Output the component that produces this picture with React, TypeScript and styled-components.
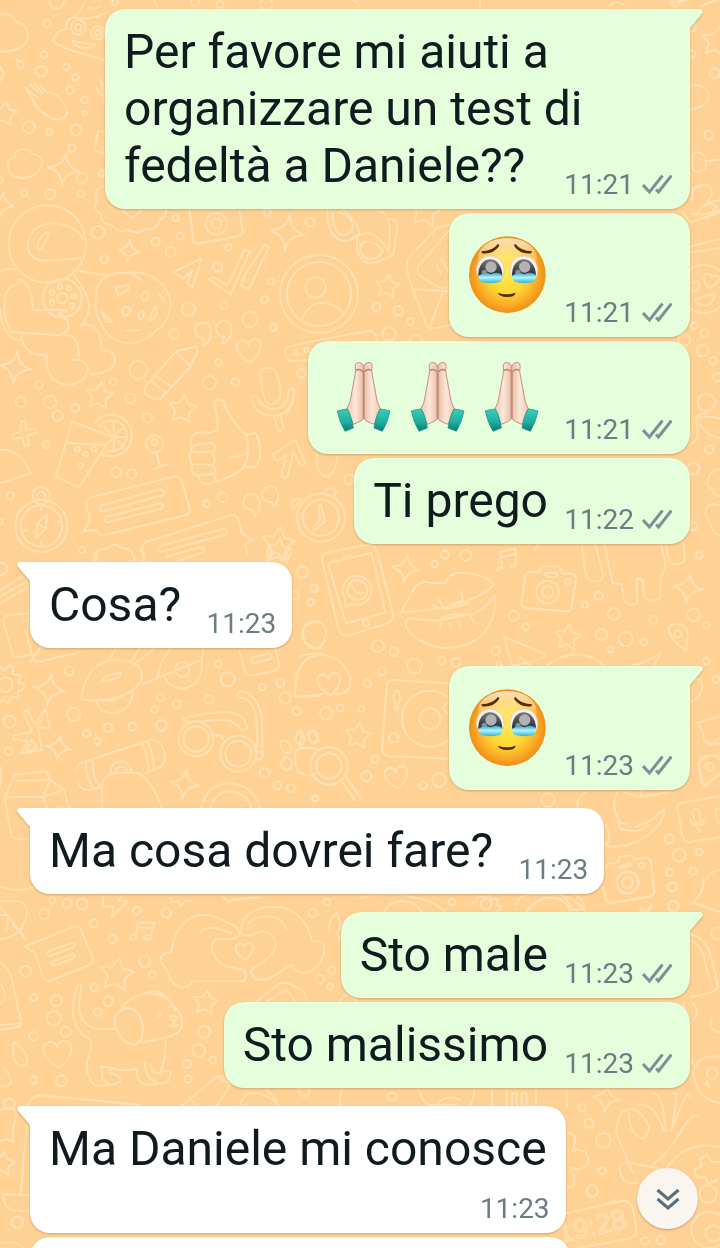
import React from "react";
import styled, { createGlobalStyle } from "styled-components";

const GlobalStyle = createGlobalStyle`
  * { box-sizing: border-box; }
  body {
    margin: 0;
    background: #ffd194;
    font-family: Roboto, "Liberation Sans", sans-serif;
  }
`;

/* ---------- Layout ---------- */

const Screen = styled.main`
  position: relative;
  height: 100vh;
  overflow: hidden;
  background: #ffd194;
`;

const WallpaperSvg = styled.svg`
  position: absolute;
  inset: 0;
  width: 100%;
  height: 100%;
  fill: none;
  stroke: #ffe0b0;
  stroke-width: 6;
  stroke-linecap: round;
  stroke-linejoin: round;
`;

const Thread = styled.ol`
  position: relative;
  display: flex;
  flex-direction: column;
  gap: 18px;
  margin: 0;
  padding: 9px 30px;
  list-style: none;
`;

const Group = styled.li<{ $out: boolean }>`
  display: flex;
  flex-direction: column;
  align-items: ${(p) => (p.$out ? "flex-end" : "flex-start")};
  gap: 4px;
`;

const Bubble = styled.article<{ $out: boolean; $first: boolean; $stacked?: boolean }>`
  position: relative;
  display: grid;
  max-width: calc(100% - ${(p) => (p.$stacked ? 120 : 75)}px);
  padding: 14px ${(p) => (p.$out ? 18 : 16)}px 7px 19px;
  border-radius: 20px;
  ${(p) => p.$first && (p.$out ? "border-top-right-radius: 0;" : "border-top-left-radius: 0;")}
  background: ${(p) => (p.$out ? "#e5fedb" : "#ffffff")};
  filter: drop-shadow(0 1px 1px rgba(120, 80, 20, 0.35));
`;

const TailSvg = styled.svg<{ $out: boolean }>`
  position: absolute;
  top: 0;
  ${(p) => (p.$out ? "right: -13px;" : "left: -13px; transform: scaleX(-1);")}
  width: 14px;
  height: 21px;
  fill: ${(p) => (p.$out ? "#e5fedb" : "#ffffff")};
`;

const Text = styled.p<{ $spacer: number; $stacked?: boolean }>`
  grid-area: 1 / 1;
  margin: 0 0 8px;
  padding-right: ${(p) => (p.$stacked ? 3 : 0)}px;
  color: #101b20;
  font-size: 48px;
  line-height: 57px;

  &::after {
    content: "";
    display: ${(p) => (p.$stacked ? "none" : "inline-block")};
    width: ${(p) => p.$spacer}px;
    height: 1px;
  }
`;

const EmojiRow = styled.div<{ $tall: boolean }>`
  grid-area: 1 / 1;
  display: flex;
  padding: ${(p) => (p.$tall ? "9px 124px 17px 0" : "5px 123px 13px 0")};
`;

const Meta = styled.footer<{ $stacked?: boolean }>`
  grid-area: ${(p) => (p.$stacked ? "2 / 1" : "1 / 1")};
  justify-self: end;
  align-self: end;
  display: flex;
  align-items: center;
  gap: 8px;
  margin-top: ${(p) => (p.$stacked ? 7 : 0)}px;
  color: #6b7d82;
  font-size: 28px;
  line-height: 34px;
`;

const TickSvg = styled.svg`
  width: 30px;
  height: 20px;
  fill: none;
  stroke: #7d9097;
  stroke-width: 3;
`;

const FaceSvg = styled.svg`
  display: block;
  width: 80px;
  height: 77px;
`;

const HandsSvg = styled.svg`
  display: block;
  width: 74px;
  height: 74px;
`;

const JumpButton = styled.button`
  position: absolute;
  right: 22px;
  bottom: 19px;
  display: grid;
  place-items: center;
  width: 61px;
  height: 61px;
  padding: 0;
  border: 0;
  border-radius: 50%;
  background: #f9f5ef;
  box-shadow: 0 1px 2px rgba(90, 60, 20, 0.35);
  cursor: pointer;

  svg {
    width: 24px;
    height: 24px;
    fill: none;
    stroke: #5c6d77;
    stroke-width: 3;
  }
`;

/* ---------- Small drawings ---------- */

const Tail = ({ out }: { out: boolean }) => (
  <TailSvg $out={out} viewBox="0 0 14 21" aria-hidden="true">
    <path d="M0 0H11.5Q15.2 1 13.2 4.6L1 19V21H0Z" />
  </TailSvg>
);

const Ticks = () => (
  <TickSvg viewBox="0 0 30 20" role="img" aria-label="Consegnato">
    <path d="M1 10L7.5 17L20.500 .5M14 14.500L16.500 17L29.500 .5" />
  </TickSvg>
);

const TearyFace = () => (
  <FaceSvg viewBox="0 0 240 231" role="img" aria-label="Faccina che trattiene le lacrime">
    <defs>
      <radialGradient id="skin" cx="0.5" cy="0.5" r="0.52">
        <stop offset="0" stopColor="#ffe94a" />
        <stop offset="0.45" stopColor="#fdd835" />
        <stop offset="0.8" stopColor="#fba524" />
        <stop offset="1" stopColor="#e88a16" />
      </radialGradient>
      <linearGradient id="shine" x1="0" y1="0" x2="0" y2="1">
        <stop offset="0" stopColor="#fff" stopOpacity="0.7" />
        <stop offset="1" stopColor="#fff2a0" stopOpacity="0" />
      </linearGradient>
      <linearGradient id="tear" x1="0" y1="0" x2="0" y2="1">
        <stop offset="0" stopColor="#2ba9cf" />
        <stop offset="0.45" stopColor="#b5f2fb" />
        <stop offset="1" stopColor="#2cb4da" />
      </linearGradient>
      <linearGradient id="iris" x1="0" y1="0" x2="0" y2="1">
        <stop offset="0" stopColor="#77787c" />
        <stop offset="0.5" stopColor="#4a4c50" />
        <stop offset="1" stopColor="#24282c" />
      </linearGradient>
    </defs>
    <circle cx="118" cy="116" r="115" fill="url(#skin)" />
    <ellipse cx="118" cy="66" rx="88" ry="60" fill="url(#shine)" />
    <g fill="#503106">
      <path d="M40 46Q72 46 90 24Q95 24 93 31Q76 56 42 52Z" />
      <path d="M192 46Q160 46 142 24Q137 24 139 31Q156 56 190 52Z" />
      <path d="M90 170Q116 180 142 170Q144 182 118 183Q92 182 90 170Z" />
    </g>
    {[0, 101].map((x) => (
      <g key={x} transform={`translate(${x} 0)`}>
        <path d="M25 104C24 46 108 44 108 104C108 116 104 124 100 128H36C30 122 26 114 25 104Z" fill="#f3f1ee" stroke="#ddc9a4" strokeWidth="2" />
        <path d="M31 122C28 54 102 52 103 120Z" fill="url(#iris)" />
        <circle cx="69" cy="93" r="17" fill="#b2b2b5" />
        <circle cx="49" cy="109" r="8" fill="#8e8f95" />
        <path d="M31 119Q50 106 68 115Q86 105 103 117Q104 132 96 138Q68 145 40 138Q31 132 31 119Z" fill="url(#tear)" />
      </g>
    ))}
  </FaceSvg>
);

const PrayingHands = () => (
  <HandsSvg viewBox="0 0 222 222" role="img" aria-label="Mani giunte">
    <defs>
      <linearGradient id="palm" x1="0" y1="0" x2="1" y2="0">
        <stop offset="0" stopColor="#edc8b4" />
        <stop offset="0.5" stopColor="#fbe7da" />
        <stop offset="1" stopColor="#e6bda8" />
      </linearGradient>
      <linearGradient id="cuff" x1="0" y1="0" x2="0" y2="1">
        <stop offset="0" stopColor="#3bcdb9" />
        <stop offset="0.6" stopColor="#20ad9d" />
        <stop offset="1" stopColor="#08796f" />
      </linearGradient>
    </defs>
    {[1, -1].map((side) => (
      <g key={side} transform={side === 1 ? undefined : "translate(220 0) scale(-1 1)"}>
        <path
          d="M110 18C105 6 90 5 86 12Q83 18 86 32C84 50 77 80 73 106Q70 130 60 146L78 193C92 188 105 184 110 174Z"
          fill="url(#palm)"
          stroke="#c98f77"
          strokeWidth="3"
        />
        <path d="M87 31Q98 24 109 36" fill="none" stroke="#bd7e66" strokeWidth="4" />
        <path d="M109 38V176" fill="none" stroke="#c1876f" strokeWidth="4" />
        <path d="M31 153Q46 148 61 147Q74 168 79 204L54 214Q38 188 31 153Z" fill="url(#cuff)" stroke="#118d82" strokeWidth="2" strokeLinejoin="round" />
      </g>
    ))}
  </HandsSvg>
);

/* ---------- Wallpaper ---------- */

type Point = [number, number, number];

const starPath = (points: number, inner: number) => {
  const parts: string[] = [];
  for (let i = 0; i < points * 2; i++) {
    const r = i % 2 ? inner : 1;
    const a = (Math.PI * i) / points - Math.PI / 2;
    parts.push(`${(Math.cos(a) * r).toFixed(3)} ${(Math.sin(a) * r).toFixed(3)}`);
  }
  return `M${parts.join("L")}Z`;
};

const STAR = starPath(5, 0.52);
const SPARKLE = "M0 -1Q.12 -.15 1 0Q.12 .15 0 1Q-.12 .15 -1 0Q-.12 -.15 0 -1Z";
const HEART = "M0 1C-1.300 .1 -1.200 -.9 -.5 -.9Q-.1 -.9 0 -.45Q.1 -.9 .5 -.9C1.200 -.9 1.300 .1 0 1Z";

const Shapes = ({ d, at, turn = 8 }: { d: string; at: Point[]; turn?: number }) => (
  <>
    {at.map(([x, y, r]) => (
      <path key={`${x}-${y}`} d={d} transform={`translate(${x} ${y}) rotate(${turn}) scale(${r})`} strokeWidth={6 / r} />
    ))}
  </>
);

const Rings = ({ at }: { at: Point[] }) => (
  <>
    {at.map(([x, y, r]) => (
      <circle key={`${x}-${y}-${r}`} cx={x} cy={y} r={r} />
    ))}
  </>
);

const Doodle = ({ x, y, children }: { x: number; y: number; children: React.ReactNode }) => (
  <g transform={`translate(${x * 3} ${y * 3})`}>{children}</g>
);

const Wallpaper = () => (
  <WallpaperSvg viewBox="0 0 2160 3744" preserveAspectRatio="xMidYMin slice" aria-hidden="true">
    <Doodle x={0} y={0}>
      <Rings
        at={[
          [170, 4, 22], [345, 6, 9], [141, 70, 11], [131, 164, 10], [124, 213, 16], [200, 201, 10], [226, 232, 10],
          [210, 271, 12], [254, 300, 10], [254, 340, 7], [86, 382, 18], [148, 397, 9], [228, 390, 16], [215, 445, 11],
          [246, 533, 15], [305, 520, 9], [73, 578, 9], [151, 583, 15], [243, 581, 10], [0, 540, 8],
          [235, 82, 22], [235, 82, 10], [294, 98, 20], [294, 98, 9], [585, 6, 12], [660, 14, 11], [798, 12, 18],
        ]}
      />
      <path d="M0 42Q36 36 46 66Q86 70 84 112Q76 144 36 152L0 155" />
      <path d="M250 12Q240 38 222 52Q195 58 200 86Q164 92 160 122Q170 138 240 158L312 180M222 52Q260 64 314 40M266 22Q280 34 300 18M218 122Q250 132 286 132Q280 148 240 142Q220 136 218 122Z" />
      <path d="M50 178Q78 190 68 204Q52 208 50 178Z" />
      <path d="M92 252L112 276M104 250L128 282M120 256L140 276Q184 278 202 336Q196 366 156 356Q110 330 100 302L76 264L110 292" />
      <path d="M0 200Q18 220 0 244M300 236L308 264M290 262L296 280L316 290M316 396L294 394L282 454L316 460" />
      <path d="M24 500Q20 476 44 472Q46 444 72 448Q96 450 98 462Q126 464 126 490Q118 530 66 534Q26 532 24 500Z" />
      <Shapes d={STAR} at={[[14, 342, 38]]} />
      <Shapes d={SPARKLE} at={[[192, 508, 48], [6, 614, 36]]} />
      <path d="M306 558Q278 572 290 602Q274 626 304 642Q300 672 334 674Q350 700 384 690Q412 704 436 688Q476 690 480 656Q500 652 498 632M368 632L396 654L424 632" />
      <path d="M460 0L472 20M1060 0L1080 18M1440 0V20M2010 10L2060 0M1830 16Q1850 -4 1872 16" />
    </Doodle>

    <Doodle x={0} y={200}>
      <Rings
        at={[
          [142, 132, 116], [294, 97, 19], [313, 178, 11], [466, 125, 12], [512, 155, 15], [540, 109, 10], [527, 55, 9],
          [649, 71, 32], [649, 71, 14], [686, 142, 10], [653, 201, 14], [565, 327, 20], [672, 317, 11], [750, 358, 23],
          [813, 244, 9], [794, 298, 10], [820, 382, 10], [522, 402, 14], [415, 510, 27], [339, 545, 10], [392, 595, 15],
          [442, 653, 14], [628, 548, 20], [655, 487, 10], [706, 546, 11], [117, 555, 11], [62, 606, 15], [150, 606, 19],
          [173, 647, 15], [226, 624, 12], [140, 735, 11], [349, 817, 15], [395, 821, 14], [187, 294, 58], [187, 294, 16],
          [180, 260, 7], [206, 265, 7], [156, 278, 7], [221, 288, 7], [156, 308, 7], [216, 317, 7], [464, 732, 26],
          [464, 726, 9], [31, 887, 11], [124, 887, 26], [124, 887, 12], [124, 978, 78], [124, 978, 62], [246, 1050, 10],
          [620, 911, 10], [668, 892, 15], [930, 66, 13], [802, 38, 10], [904, 520, 13],
          [0, 965, 8], [232, 748, 7], [257, 762, 7], [282, 747, 7], [242, 796, 7],
        ]}
      />
      <path d="M242 174Q160 182 132 182Q86 176 82 140Q88 72 160 70Q230 76 250 118M112 140Q114 108 144 96Q152 104 136 124Q128 150 116 146Z" />
      <path d="M0 216Q30 200 46 208M56 238Q98 250 98 330L202 330L176 342Q206 354 206 376Q206 398 176 406L34 396Q10 364 14 306Q16 258 56 250M0 330Q10 420 64 420M64 406Q64 440 100 462L140 466Q134 556 212 554Q264 544 264 502Q252 476 218 480M236 476Q240 404 196 406M222 210L282 220Q320 230 336 222M222 226Q280 300 264 340Q252 370 242 380M244 374Q306 366 304 450Q346 450 344 486Q334 522 268 522" />
      <path d="M290 264Q320 210 380 220Q426 208 466 236Q506 262 512 306Q510 366 470 390Q440 430 380 430Q320 416 304 372Q278 330 290 264M346 262L390 254L384 268L354 286ZM424 290Q430 266 444 284Q444 302 430 304ZM366 330Q380 312 392 328Q386 350 370 346ZM416 346Q424 320 432 340Q430 358 418 358ZM304 334L338 368L318 364ZM466 318Q480 350 446 362ZM380 392L416 390M398 222L426 242M476 280L492 300" />
      <path d="M568 30L580 120Q584 132 600 130L716 108Q730 104 728 90L718 34M520 216L604 176Q594 220 576 262L562 250L576 212L550 236ZM626 238L640 232L682 256L734 148L750 154L692 284ZM724 242L794 134L806 142L746 270L722 256L736 236" />
      <path d="M612 416A24 24 0 1 1 632 400Q632 424 612 438L610 416M672 410A24 24 0 1 1 694 394Q694 418 666 432L672 410" />
      <path d="M434 562L528 454L590 440L592 456L568 504L482 596Q458 602 436 580ZM528 454L572 500M454 544L500 580M470 530L516 562" />
      <path d="M780 520Q790 500 816 504Q836 510 842 580Q838 612 812 614Q790 608 786 560ZM756 594Q760 646 826 648Q884 636 882 570Q870 560 864 580Q864 624 820 628Q780 620 772 590Q760 582 756 594M820 648L836 692Q846 696 850 684L842 648" />
      <path d="M654 686Q648 620 640 606Q656 590 672 606Q682 652 738 704Q750 740 738 788Q730 820 640 848Q600 862 594 826Q570 822 576 794Q564 772 574 752Q560 690 620 698Q640 698 654 686M574 750Q580 728 636 730Q654 742 638 754Q600 760 576 754M576 794Q600 788 636 796Q652 782 638 762M594 826L640 822Q654 812 640 800M640 848Q656 840 640 826M690 772Q730 770 740 756M740 704L766 698Q790 740 774 794Q764 804 740 802" />
      <path d="M820 762L886 720L916 790Q908 804 898 790L880 754L864 828Q854 840 844 828L858 766L832 782Q820 780 820 762" />
      <path d="M282 672A62 62 0 1 1 306 762M298 680A46 46 0 1 1 322 752M216 664L168 830L236 862L318 736L204 728M216 664L340 712L318 736M341 670V752M341 711H382M312 682L370 740M370 682L341 711M470 760L480 800M458 808L500 794M0 750Q60 744 92 820L0 850" />
      <path d="M64 664L76 662L78 688L110 686L110 698L82 708L86 736L74 740L66 712L38 718L36 704L62 694ZM108 1014L112 970L142 942L138 984ZM112 972L136 984M124 920V932M124 1024V1036M66 994L80 990M168 966L180 964" />
      <path d="M280 890L520 830Q540 826 546 844L570 930Q570 942 556 946L312 1006Q298 1010 290 990L252 994L270 962L258 910Q260 896 280 890M306 916L480 868Q498 872 488 886L312 934Q292 934 306 916M322 950L480 910Q496 914 484 926L326 966Q306 966 322 950" />
      <path d="M432 1080L426 1046Q428 1030 444 1024L690 946Q710 942 716 962L726 1000L756 1022L736 1034L742 1064M480 1038L670 986Q690 990 676 1004L490 1054Q466 1056 480 1038M500 1070L600 1042Q622 1044 610 1058L540 1080M290 1080Q284 1042 324 1046Q340 1024 364 1044Q404 1046 402 1080" />
      <path d="M756 930A24 24 0 1 1 778 910Q782 932 766 948L756 930M814 906A24 24 0 1 1 834 882Q838 904 822 920L814 906" />
      <Shapes d={STAR} at={[[298, 588, 42], [548, 628, 44], [834, 1032, 52]]} />
      <Shapes d={SPARKLE} at={[[386, 153, 34], [862, 98, 52], [46, 502, 48]]} />
      <Shapes d={HEART} at={[[748, 452, 36]]} turn={-8} />
    </Doodle>

    <Doodle x={280} y={200}>
      <Rings
        at={[
          [117, 282, 117], [117, 282, 96], [107, 262, 31], [289, 322, 12], [355, 332, 14], [391, 365, 11], [327, 402, 20],
          [408, 422, 18], [65, 520, 13], [48, 460, 6], [80, 450, 6],
        ]}
      />
      <path d="M66 360Q84 308 128 308Q168 310 192 342M142 30Q140 110 190 124Q222 120 234 104Q222 160 252 184Q280 200 340 164L352 80Q346 50 324 58Q330 72 330 94L326 154Q280 80 240 106Q232 60 190 30M158 36Q156 96 190 106Q220 104 218 70Q206 44 176 36M300 34L316 44M240 140Q260 106 308 150Q298 180 262 178Q240 166 240 140" />
      <path d="M508 74L470 84L384 176Q374 206 400 272L440 376Q446 388 470 384L512 376M400 268L508 274M490 274L450 378M508 90L414 200Q408 220 430 234L476 262Q496 266 508 258M470 196L482 220M484 176L504 214" />
      <path d="M86 480L30 484Q8 468 18 444Q30 434 270 392Q288 396 290 420M22 640Q46 600 40 564" />
      <Shapes d={STAR} at={[[322, 260, 36], [436, 34, 48]]} />
    </Doodle>

    <Doodle x={180} y={440}>
      <Rings at={[[423, 233, 72], [423, 233, 54], [508, 118, 15]]} />
      <path d="M416 194L424 196L434 244L406 270L400 262L420 240ZM336 204Q330 174 364 178L340 206M436 152Q456 134 472 158L464 166M410 46Q408 110 444 110Q470 92 472 48" />
    </Doodle>

    <Doodle x={440} y={205}>
      <Rings
        at={[
          [792, 252, 72], [794, 384, 12], [764, 362, 10], [789, 437, 17], [819, 468, 11], [832, 516, 12], [799, 592, 26],
          [808, 734, 12], [760, 790, 17], [760, 964, 11], [732, 404, 18],
        ]}
      />
      <path d="M728 20L750 52L840 22M770 30Q790 -16 830 4L800 40M752 124L840 102M752 142L840 130M764 286Q790 272 824 266Q820 300 796 302Q776 300 764 286M760 236Q770 220 778 240Q774 262 758 258M756 716Q784 700 766 640Q800 630 840 640M766 640Q780 620 800 626M840 700Q800 690 780 660M840 792Q802 800 804 832Q800 850 820 852Q820 872 840 874M840 900L808 898Q790 920 800 938L826 986L840 990" />
      <Shapes d={HEART} at={[[812, 228, 22]]} turn={14} />
    </Doodle>

    <Doodle x={600} y={0}>
      <Rings at={[[226, 8, 12], [274, 162, 12], [344, 220, 15], [326, 405, 13]]} />
      <path d="M272 66Q290 70 290 88L274 96M272 256Q320 250 326 288Q320 322 272 328M284 458Q310 456 316 474L318 500Q312 516 286 514Q276 510 278 486Q276 464 284 458M318 484L360 478M276 600Q272 550 322 556Q350 570 320 610L360 600M276 566L300 560M272 640Q310 650 360 630M300 20L350 0" />
      <Shapes d={STAR} at={[[350, 126, 46]]} />
    </Doodle>

    <Doodle x={0} y={550}>
      <Rings
        at={[
          [907, 66, 17], [942, 115, 11], [932, 157, 10], [207, 363, 13], [655, 342, 10], [683, 388, 21], [787, 411, 10],
          [841, 398, 12], [855, 444, 17], [890, 484, 12], [481, 443, 11], [530, 463, 12], [463, 479, 10], [628, 448, 13],
          [221, 493, 20], [29, 515, 18], [324, 533, 13], [398, 530, 12], [484, 526, 16], [260, 551, 11], [292, 573, 10],
          [25, 604, 11], [588, 567, 52], [588, 567, 38], [715, 611, 54], [715, 611, 39], [794, 669, 15], [832, 706, 11],
          [873, 715, 12], [946, 746, 9], [16, 404, 22], [547, 358, 22], [884, 136, 12], [4, 56, 18],
        ]}
      />
      <path d="M0 348L10 362L28 346L40 352L38 372L62 376L56 398L74 404L68 420L54 424L56 444L34 440L26 460L8 448L0 458" />
      <path d="M88 190L24 196Q8 202 12 220L36 308Q40 324 60 320L90 314M92 206L70 214M76 240L98 322Q104 338 124 334L240 306M92 334L142 262L200 290M0 140L78 96M0 160L82 112M0 122L66 80" />
      <path d="M244 446Q260 330 350 330Q430 332 426 384Q410 430 330 448Q260 456 244 446M306 388Q320 374 360 368Q370 376 350 384Q310 400 306 388M290 456Q300 490 344 490Q398 478 398 420M320 448Q340 460 358 442M326 330L348 296M392 336L418 296M406 340L462 296M430 402L472 384Q480 330 512 296M472 384L604 330Q610 310 610 296M490 376Q510 416 552 416Q610 402 606 332" />
      <path d="M718 302L736 366Q740 378 756 376L822 362Q838 358 836 340L826 296M756 324L806 310Q820 312 812 326L764 340Q750 338 756 324M886 440Q880 320 960 314M886 440L960 438M960 214Q900 220 908 260Q920 294 960 296M284 36Q280 0 300 0M430 36Q440 10 420 0M800 36L816 0M860 36L872 10" />
      <path d="M550 504Q600 490 680 486Q730 490 742 530Q738 546 724 540Q700 506 660 510L562 516Q540 500 550 504M640 560Q660 544 676 576M712 432Q724 418 742 428Q788 460 786 520L788 614Q790 626 768 630M770 592Q774 500 760 470Q740 440 718 444Q708 440 712 432M760 598L790 612" />
      <path d="M70 486L82 480L104 522L136 476L150 534L114 532L126 600L62 612L84 574L38 568L42 556L96 546ZM112 524L128 506M78 604L96 568L110 594Z" />
      <path d="M230 656Q232 644 250 636L450 570Q486 566 494 612Q498 648 470 656L440 668M258 632Q254 680 282 716L300 712M278 626Q276 680 300 710M236 700Q246 724 270 720L306 712M424 578Q440 600 446 662M440 574Q460 600 462 658M334 672Q326 634 366 634Q392 640 394 664M346 672Q344 650 366 650Q382 654 380 666M306 774V700Q320 670 350 668L410 668Q450 680 486 774" />
      <path d="M14 742L44 674L140 664L150 690L192 718L206 774M14 742L130 740L150 690L48 692M130 740L140 774M14 742L34 860Q40 868 80 868M192 718L136 740M172 770L190 774M0 650Q8 680 0 706M604 774Q620 700 692 700Q760 706 780 774M630 774Q644 726 690 724Q740 728 754 774" />
      <path d="M890 556Q900 530 912 560Q916 588 900 584Q880 576 890 556M924 554Q940 530 952 550Q956 570 942 578Q926 580 924 554M842 574Q866 568 876 596Q870 616 852 606Q838 590 842 574M844 634Q860 610 876 636Q876 660 860 660Q840 656 844 634M888 600Q920 588 954 598M888 600Q880 640 894 664Q920 684 944 672" />
      <Shapes d={STAR} at={[[836, 2, 36]]} />
      <Shapes d={SPARKLE} at={[[148, 418, 48], [176, 593, 36], [554, 702, 44]]} />
    </Doodle>

    <Doodle x={300} y={540}>
      <Rings
        at={[
          [8, 96, 16], [42, 146, 11], [32, 187, 10], [404, 71, 10], [435, 44, 12], [498, 46, 16],
          [172, 150, 30], [198, 250, 10], [641, 227, 15], [677, 261, 10], [743, 156, 34], [743, 156, 17], [803, 125, 8],
          [855, 194, 9], [896, 167, 12], [941, 222, 18], [1060, 240, 12], [904, 284, 17], [977, 297, 21], [1031, 306, 10],
          [932, 328, 9], [1180, 225, 19], [1219, 256, 10], [1198, 46, 10], [1133, 281, 11], [234, 318, 18], [282, 335, 13],
          [344, 378, 22], [425, 362, 11], [467, 367, 13], [587, 333, 12], [597, 372, 8], [246, 394, 12], [201, 429, 11],
          [78, 520, 18], [121, 504, 10], [184, 506, 9], [390, 536, 84], [390, 536, 31], [281, 593, 14], [225, 658, 10],
          [87, 678, 56], [87, 678, 38], [199, 709, 15], [369, 736, 11], [417, 720, 20], [46, 774, 9], [1220, 363, 10],
          [1248, 418, 10],
        ]}
      />
      <path d="M66 60Q64 40 86 36L206 14Q226 14 232 36L280 226Q280 244 262 250L146 286Q124 290 116 270ZM84 70L214 38L256 218L138 250ZM130 52L156 44M134 172A43 43 0 1 1 160 192L138 200ZM156 138L162 150Q170 164 188 158" />
      <path d="M304 216L344 142Q364 120 392 128L436 130Q446 96 490 98Q560 104 580 134Q560 160 500 182Q440 210 304 216M318 244Q320 230 350 238L416 242L470 230L520 222Q566 200 584 166Q594 210 564 262Q530 320 440 324Q360 320 318 262ZM400 196Q440 220 510 186M416 178L430 200M484 154L488 180L450 196M416 242Q436 220 480 224L506 222M424 250L420 266M450 248L452 268M478 244L482 262M512 228L522 248" />
      <path d="M590 92Q590 80 606 80Q610 90 590 92M606 80L600 36L646 26L648 72M600 52L646 42M648 72Q632 70 630 80Q640 90 648 72M704 30Q716 10 724 0" />
      <path d="M664 196L676 106Q680 94 694 96L716 98L724 82Q728 76 740 78L776 80Q786 82 786 100L816 102Q830 106 828 120L814 204Q812 216 796 214L680 204Q664 202 664 196M734 98L768 98Q776 106 766 112L742 110Q732 104 734 98" />
      <path d="M846 20L858 108Q870 130 900 122Q914 110 906 92L886 12M914 14L938 130L966 132L970 176Q984 202 1012 190L1010 116L1028 118L1032 170Q1050 192 1080 176L1082 110Q1100 90 1094 60L1082 10M1098 12L1106 62Q1124 82 1150 66Q1158 50 1150 10" />
      <path d="M1106 268Q1110 248 1140 252Q1164 262 1164 288L1158 330Q1114 308 1106 268M10 290Q4 246 42 244Q80 246 78 284Q68 326 46 326Q16 322 10 290M0 348Q50 330 110 358Q158 390 150 440Q140 466 100 462M0 470L70 462" />
      <path d="M612 290L730 340Q740 350 724 356L652 374L636 376ZM660 352L690 374M740 376Q790 340 840 344Q890 350 910 376M1000 376Q1060 360 1082 336Q1080 350 1060 376" />
      <path d="M446 430L278 420Q262 420 260 438L246 628Q248 644 264 648L446 656M286 454L294 450L302 476L294 490L292 512L284 506L286 488L280 474ZM440 490Q420 500 440 520" />
      <path d="M1172 424Q1210 400 1206 450Q1194 480 1172 484M1190 548L1256 530M1190 548Q1210 566 1214 604L1234 614L1260 592M1196 670Q1200 648 1230 646Q1256 648 1260 660M1196 670Q1196 710 1216 740L1260 700M1212 680Q1216 666 1232 668M0 570Q10 590 0 610M24 578Q40 560 56 604Q40 616 28 600ZM0 622L44 626M124 722L164 780M140 712L182 774" />
      <Shapes d={STAR} at={[[803, 292, 40], [174, 588, 40]]} />
      <Shapes d={SPARKLE} at={[[318, 86, 42], [1164, 144, 44]]} />
      <Shapes d={HEART} at={[[88, 432, 34], [290, 712, 34]]} turn={-8} />
    </Doodle>

    <Doodle x={540} y={740}>
      <Rings
        at={[
          [511, 82, 11], [388, 296, 14], [418, 346, 19], [478, 336, 10], [459, 393, 11], [389, 397, 11], [397, 442, 13],
          [400, 498, 15], [264, 427, 33], [264, 427, 16], [305, 376, 8], [24, 180, 20],
        ]}
      />
      <path d="M488 140L478 80Q480 46 540 46M488 140L540 100M500 0Q510 14 540 10M232 156Q210 200 240 246Q230 270 262 270Q310 280 322 250M232 246L262 252M286 262L316 248M254 156L300 172L390 156M300 172L306 150M322 250L372 208Q372 260 300 300Q250 326 196 318M196 254Q220 290 196 316M112 200Q110 170 136 158" />
      <path d="M540 168L424 188Q410 192 412 206L428 292Q434 308 450 306L540 292M458 212Q468 200 478 212L482 240Q476 254 464 246ZM450 238Q462 266 490 250L492 238M470 260L480 276M528 204L540 208M528 204L530 240L540 250" />
      <path d="M196 386L204 372L232 366L240 350L276 346L284 358L316 354Q330 352 332 366L344 452Q344 464 330 468L214 490Q200 492 194 470L188 440M238 380L270 368L272 376L242 386ZM460 488Q494 456 490 430Q510 390 540 390M460 488L540 516M70 466L100 510L134 508Q130 476 100 460M300 500L320 516L334 492" />
    </Doodle>

    <Doodle x={0} y={880}>
      <Rings
        at={[
          [157, 61, 9], [201, 70, 13], [247, 72, 16], [133, 102, 15], [281, 130, 12], [338, 178, 12], [411, 92, 11],
          [499, 99, 14], [434, 244, 17], [457, 284, 10], [77, 274, 16], [283, 322, 11], [325, 364, 15], [101, 352, 11],
          [169, 362, 17], [161, 415, 21], [294, 396, 12], [197, 455, 15], [101, 469, 13], [184, 602, 16], [101, 600, 11],
          [613, 455, 18], [596, 512, 19], [638, 540, 10], [560, 552, 12], [565, 597, 11], [938, 99, 12], [981, 66, 10],
          [996, 271, 11], [959, 298, 13], [990, 320, 9], [478, 404, 5], [52, 1026, 17], [912, 634, 15], [1044, 366, 22],
          [28, 672, 16],
        ]}
      />
      <path d="M0 20Q60 40 100 20M0 64L56 64Q84 70 80 104Q68 170 0 178M0 80L74 170M20 146L24 106L0 104M40 134L76 178" />
      <path d="M74 200L216 142Q236 134 244 152L278 234Q282 250 262 258L156 300Q140 308 130 294L106 220ZM144 214L218 188Q232 192 220 202L150 228Q136 226 144 214M158 244L218 222Q230 228 220 236L164 256Q150 254 158 244" />
      <path d="M310 46L308 78L340 80L334 112L382 64L354 62L366 46M390 174Q392 162 408 164L414 128L464 128L450 176Q440 184 432 174Q434 164 448 164M412 142L458 144M408 168Q404 182 392 178M510 52L516 66L534 64L544 78L556 62L574 64M670 52L680 62L776 52" />
      <path d="M480 242Q480 220 514 216Q520 150 566 118Q600 96 646 110L700 136Q724 150 716 168Q706 180 650 176Q630 190 638 214Q650 254 690 262L732 270Q746 284 732 304L576 304Q570 324 548 322Q510 316 506 280ZM600 160Q616 138 646 144L690 158M724 160Q720 120 752 98Q800 70 860 86Q920 110 936 184Q970 180 974 200Q970 262 920 278Q884 282 876 254L810 294Q780 306 760 292Q744 270 766 262Q820 230 828 196Q822 150 776 156Q740 176 724 160M744 130Q770 104 820 110Q850 120 860 148" />
      <path d="M0 250Q30 262 36 300L64 430Q64 440 50 442L0 450M0 310Q30 350 0 372M0 436L62 430M990 160Q980 120 1010 100Q1030 140 1010 160L1024 180M766 366L840 310Q860 304 880 316L912 336L920 364M800 364L860 330L884 362" />
      <path d="M232 318Q244 306 244 322L238 364Q232 440 300 448L344 446M232 318Q208 390 226 430Q240 462 270 480Q280 500 262 540Q256 590 284 616Q330 620 360 606Q366 586 332 580L330 562L304 560L308 598L330 612M330 562Q360 576 410 566Q410 610 440 614L500 608Q516 590 510 572L482 574Q500 530 496 478M434 546Q436 600 470 606M452 552L458 576L482 580M344 430Q340 390 384 384Q420 386 428 440Q430 490 402 494Q360 492 344 430M358 400Q380 348 440 340Q500 340 520 380Q550 400 546 440Q536 464 500 472L430 486M440 338Q476 322 508 362M506 382Q520 370 526 392M510 412Q520 404 532 412L520 426ZM520 426L522 440L508 436M522 440L534 436" />
      <path d="M42 486Q80 510 82 540Q78 558 60 556Q32 548 42 486M12 562Q36 590 32 610Q20 624 0 616M86 676Q90 650 120 646L420 674M0 690Q50 670 48 710Q34 750 40 786Q20 770 0 784M80 740L62 940M10 942L90 946M10 942Q10 990 50 992L90 994M0 1090Q50 1080 70 1104M548 676L650 590Q670 580 690 610Q680 640 650 676M566 650L586 674M650 590L690 612M720 676Q730 630 780 640Q830 660 834 676M800 630L830 660M1018 676L1024 630" />
      <Shapes d={STAR} at={[[350, 284, 52], [617, 368, 38], [8, 852, 38]]} />
      <Shapes d={HEART} at={[[174, 522, 42], [734, 214, 26]]} turn={-4} />
    </Doodle>

    <Doodle x={360} y={880}>
      <Rings
        at={[
          [276, 66, 10], [378, 72, 16], [802, 8, 32], [802, 8, 16], [937, 20, 13], [940, 78, 16], [1072, 160, 18],
          [96, 650, 12], [666, 683, 11], [687, 730, 14], [730, 781, 22], [726, 872, 11], [697, 933, 17], [855, 1083, 11],
          [903, 1080, 13], [1044, 942, 26], [1048, 1050, 54], [1060, 1060, 24], [1057, 580, 16],
        ]}
      />
      <path d="M0 54Q100 30 160 52Q220 60 254 94M74 94Q90 60 130 64Q170 66 182 94M336 70L350 64L354 48L372 52L386 46L396 58L412 58L412 74L424 80L412 94M466 74Q480 40 520 42L560 42Q640 40 674 94M500 94Q540 40 600 58Q624 70 630 94M730 20L740 60Q744 70 760 68L870 50Q884 46 882 30L876 0M998 68Q1030 40 1030 0M998 68L1080 96M840 90L860 104L876 80" />
      <path d="M992 164Q1040 170 1056 240L1074 320Q1068 340 992 350M992 182Q1030 200 1036 250L1048 300M972 370L976 424M1000 370Q1020 400 1000 420M1056 412Q1040 450 1080 458M1080 530Q1010 520 1000 580Q1010 660 1080 668M994 540L1006 560M1030 610L1050 616M1040 600L1044 622M176 630Q190 676 220 676L290 676M344 630Q340 660 330 676M232 672Q260 640 300 660M396 630V676M440 630V676M528 630V676M456 676V640H470V676M486 676V640H500V676M620 630V680" />
      <path d="M820 880L768 760Q774 690 800 692Q830 670 868 740Q860 770 850 776Q810 770 806 700M832 676Q880 660 912 752M880 640Q900 640 910 690L918 752M940 640Q960 620 934 752M990 650Q990 630 970 660L934 752M1018 710Q1000 690 960 760L912 826L880 852M780 858Q776 896 806 908L832 910M780 858Q790 844 820 850L900 866M620 760Q660 760 636 812Q690 800 684 850Q660 880 630 860Q650 900 640 920L620 920" />
      <path d="M920 866Q960 800 1040 796L1080 800M1020 838L1040 824L1056 846L1080 846M1020 838L1024 860L1004 868L1010 894L1034 890L1044 910L1070 900M620 1000L790 962Q812 962 818 984L830 1050Q830 1070 810 1076L620 1110M740 970L770 958" />
      <text x="600" y="1090" transform="rotate(-13 600 1090)" fontFamily="Liberation Sans, sans-serif" fontSize="84" strokeWidth="4">
        19:28
      </text>
      <Shapes d={SPARKLE} at={[[738, 655, 42]]} />
    </Doodle>
  </WallpaperSvg>
);

/* ---------- Conversation ---------- */

type Message = {
  text?: string;
  emoji?: "teary" | "hands";
  time: string;
  stacked?: boolean;
};

const conversation: { out: boolean; messages: Message[] }[] = [
  {
    out: true,
    messages: [
      { text: "Per favore mi aiuti a organizzare un test di fedeltà a Daniele??", time: "11:21" },
      { emoji: "teary", time: "11:21" },
      { emoji: "hands", time: "11:21" },
      { text: "Ti prego", time: "11:22" },
    ],
  },
  { out: false, messages: [{ text: "Cosa?", time: "11:23" }] },
  { out: true, messages: [{ emoji: "teary", time: "11:23" }] },
  { out: false, messages: [{ text: "Ma cosa dovrei fare?", time: "11:23" }] },
  {
    out: true,
    messages: [
      { text: "Sto male", time: "11:23" },
      { text: "Sto malissimo", time: "11:23" },
    ],
  },
  {
    out: false,
    messages: [
      { text: "Ma Daniele mi conosce", time: "11:23", stacked: true },
      { text: "", time: "", stacked: true },
    ],
  },
];

const NextBubble = styled(Bubble)`
  width: 540px;
  height: 86px;
`;

const MessageBubble = ({ message, out, first }: { message: Message; out: boolean; first: boolean }) => {
  const { text, emoji, time, stacked } = message;
  if (!time) return <NextBubble $out={out} $first={false} aria-hidden="true" />;
  return (
    <Bubble $out={out} $first={first} $stacked={stacked}>
      {first && <Tail out={out} />}
      {text && (
        <Text $spacer={out ? 124 : 95} $stacked={stacked}>
          {text}
        </Text>
      )}
      {emoji && (
        <EmojiRow $tall={emoji === "teary"}>
          {emoji === "teary" ? (
            <TearyFace />
          ) : (
            <>
              <PrayingHands />
              <PrayingHands />
              <PrayingHands />
            </>
          )}
        </EmojiRow>
      )}
      <Meta $stacked={stacked}>
        <time>{time}</time>
        {out && <Ticks />}
      </Meta>
    </Bubble>
  );
};

export default function App() {
  return (
    <>
      <GlobalStyle />
      <Screen>
        <Wallpaper />
        <Thread>
          {conversation.map((group, g) => (
            <Group key={g} $out={group.out}>
              {group.messages.map((message, m) => (
                <MessageBubble key={m} message={message} out={group.out} first={m === 0} />
              ))}
            </Group>
          ))}
        </Thread>
        <JumpButton type="button" aria-label="Vai in fondo alla chat">
          <svg viewBox="0 0 24 24" aria-hidden="true">
            <path d="M1.500 3L12 12L22.500 3M1.500 12L12 21L22.500 12" />
          </svg>
        </JumpButton>
      </Screen>
    </>
  );
}
